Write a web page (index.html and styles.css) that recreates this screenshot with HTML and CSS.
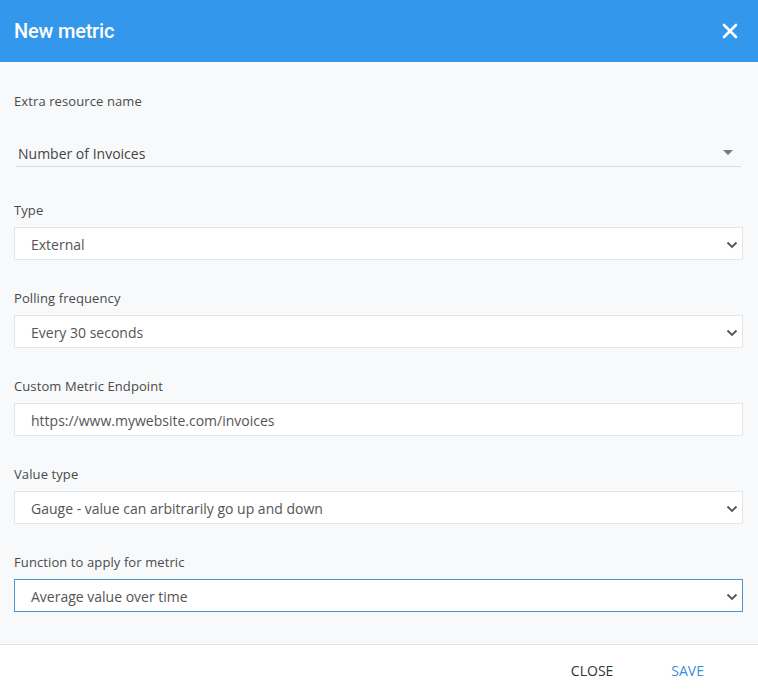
FILE: index.html
```
<!DOCTYPE html>
<html>
<head>
<meta charset="utf-8">
<link rel="stylesheet" href="styles.css">
</head>
<body>
<div class="dialog">
  <div class="header">
    <h1 class="title">New metric</h1>
    <svg class="close-x" width="16" height="16" viewBox="0 0 16 16"><path d="M2 2 L14 14 M14 2 L2 14" stroke="#fff" stroke-width="2.6" stroke-linecap="round"/></svg>
  </div>
  <div class="content">
    <div class="field first">
      <div class="label">Extra resource name</div>
      <div class="dropdown">
        <span>Number of Invoices</span>
        <svg width="10" height="6" viewBox="0 0 10 6"><path d="M0 0 H10 L5 5 Z" fill="#777"/></svg>
      </div>
    </div>
    <div class="field">
      <div class="label">Type</div>
      <div class="select"><span>External</span><svg class="chev" width="12" height="8" viewBox="0 0 12 8"><path d="M1.5 1.5 L6 6 L10.5 1.5" fill="none" stroke="#555" stroke-width="1.8"/></svg></div>
    </div>
    <div class="field">
      <div class="label">Polling frequency</div>
      <div class="select"><span>Every 30 seconds</span><svg class="chev" width="12" height="8" viewBox="0 0 12 8"><path d="M1.5 1.5 L6 6 L10.5 1.5" fill="none" stroke="#555" stroke-width="1.8"/></svg></div>
    </div>
    <div class="field">
      <div class="label">Custom Metric Endpoint</div>
      <div class="select input"><span>https://www.mywebsite.com/invoices</span></div>
    </div>
    <div class="field">
      <div class="label">Value type</div>
      <div class="select"><span>Gauge - value can arbitrarily go up and down</span><svg class="chev" width="12" height="8" viewBox="0 0 12 8"><path d="M1.5 1.5 L6 6 L10.5 1.5" fill="none" stroke="#555" stroke-width="1.8"/></svg></div>
    </div>
    <div class="field">
      <div class="label">Function to apply for metric</div>
      <div class="select focused"><span>Average value over time</span><svg class="chev" width="12" height="8" viewBox="0 0 12 8"><path d="M1.5 1.5 L6 6 L10.5 1.5" fill="none" stroke="#555" stroke-width="1.8"/></svg></div>
    </div>
  </div>
  <div class="footer">
    <button class="btn btn-close">CLOSE</button>
    <button class="btn btn-save">SAVE</button>
  </div>
</div>
</body>
</html>
```
FILE: styles.css
```
* { box-sizing: border-box; }
html, body { margin: 0; padding: 0; }
body {
  font-family: "Open Sans", "Liberation Sans", sans-serif;
  background: #ffffff;
}
.dialog {
  width: 758px;
  height: 696px;
  display: flex;
  flex-direction: column;
}
.header {
  height: 62px;
  flex: none;
  background: #3397ec;
  display: flex;
  align-items: center;
  justify-content: space-between;
  padding: 0 20px 0 14px;
}
.title {
  margin: 0;
  font-family: Roboto, "Liberation Sans", sans-serif;
  font-weight: 500;
  font-size: 20px;
  letter-spacing: -0.2px;
  color: #ffffff;
  line-height: 24px;
  padding-bottom: 1px;
}
.close-x { display: block; }
.content {
  flex: 1;
  background: #f8f9fb;
  padding: 29px 15px 0 14px;
}
.field { margin-bottom: 28px; }
.field.first { margin-bottom: 33px; }
.label {
  font-size: 13px;
  line-height: 20px;
  color: #4a4a4a;
  letter-spacing: 0.1px;
  margin-bottom: 7px;
}
.first .label { margin-bottom: 31px; }
.dropdown {
  margin: 0 2px;
  height: 25px;
  padding: 0 8px 2px 2px;
  border-bottom: 1px solid #dcdcdc;
  display: flex;
  align-items: center;
  justify-content: space-between;
  font-size: 14px;
  color: #444;
}
.select {
  height: 33px;
  background: #fff;
  border: 1px solid #e2e4e6;
  display: flex;
  align-items: center;
  justify-content: space-between;
  padding: 2px 4px 0 16px;
  font-size: 14px;
  color: #555;
}
.select.focused { border-color: #4a93d0; }
.chev { display: block; }
.footer {
  height: 52px;
  flex: none;
  border-top: 1px solid #e2e2e2;
  background: #fff;
  display: flex;
  align-items: center;
  justify-content: flex-end;
  padding: 0 54px 0 0;
  gap: 58px;
}
.btn {
  background: none;
  border: none;
  padding: 0;
  font-family: "Open Sans", "Liberation Sans", sans-serif;
  font-size: 14px;
  line-height: 20px;
}
.btn-close { color: #333; }
.btn-save { color: #3b8fdb; }
```
